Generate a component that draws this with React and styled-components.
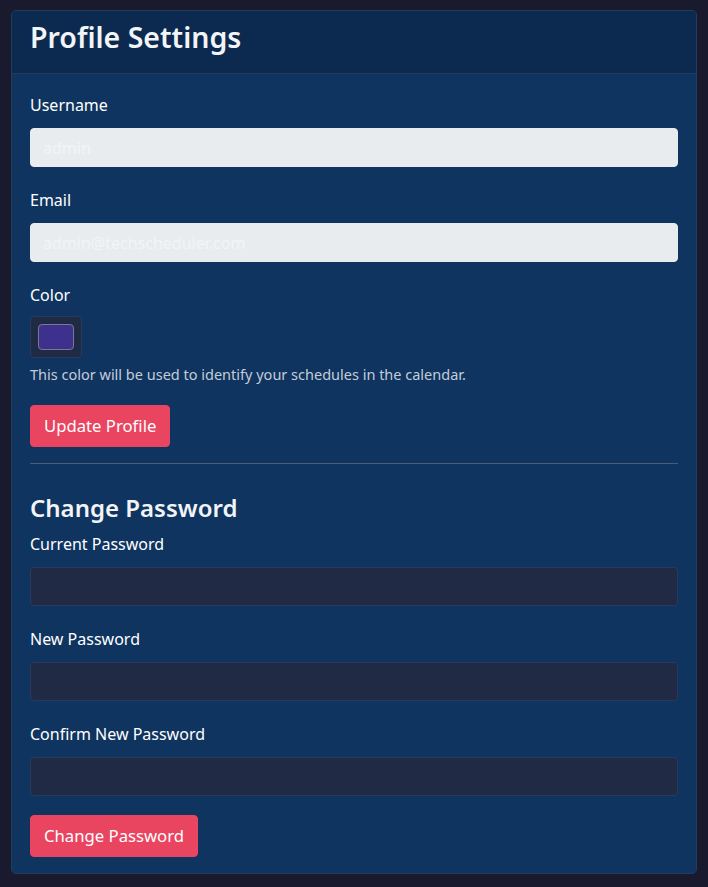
import React from "react";
import styled, { createGlobalStyle } from "styled-components";

const GlobalStyle = createGlobalStyle`
  html, body {
    margin: 0;
    padding: 0;
    background: #1a1a2e;
  }
  body {
    font-family: "Noto Sans", "Open Sans", sans-serif;
    color: #ffffff;
  }
  * { box-sizing: border-box; }
`;

const Page = styled.div`
  padding: 10px 11px 13px;
  background: #1a1a2e;
`;

const Card = styled.section`
  background: #0f3460;
  border: 1px solid #253b5e;
  border-radius: 5px;
  overflow: hidden;
`;

const CardHeader = styled.header`
  background: #0c2a4f;
  border-bottom: 1px solid #243a5c;
  padding: 9px 18px 0;
  height: 63px;
  display: flex;
  align-items: flex-start;
`;

const Title = styled.h2`
  margin: 0;
  font-size: 28.5px;
  line-height: 1.2;
  font-weight: 600;
  color: #f2f4f7;
`;

const CardBody = styled.div`
  padding: 18px 18px 16px;
`;

const FormGroup = styled.div`
  margin-bottom: ${(p) => p.$mb ?? 20}px;
`;

const Label = styled.label`
  display: block;
  font-size: 16px;
  line-height: 27px;
  margin-bottom: ${(p) => p.$mb ?? 9}px;
  color: #ffffff;
`;

const Input = styled.input`
  display: block;
  width: 100%;
  height: 39px;
  padding: 6px 12px;
  font-family: inherit;
  font-size: 16px;
  border-radius: 4px;
  outline: none;
  border: 1px solid ${(p) => (p.disabled ? "#e9ecef" : "#2a3a5c")};
  background: ${(p) => (p.disabled ? "#e9ecef" : "#212a45")};
  color: ${(p) => (p.disabled ? "#f3f4f6" : "#ffffff")};
  -webkit-text-fill-color: ${(p) => (p.disabled ? "#f3f4f6" : "#ffffff")};
  opacity: 1;
`;

const ColorBox = styled.div`
  width: 52px;
  height: 42px;
  padding: 7px;
  background: #1f2a45;
  border: 1px solid #2a3a5c;
  border-radius: 4px;
`;

const Swatch = styled.div`
  width: 100%;
  height: 100%;
  background: ${(p) => p.$color};
  border: 1px solid #7a7a8e;
  border-radius: 4px;
`;

const HelpText = styled.div`
  margin-top: 6px;
  font-size: 14.5px;
  line-height: 21px;
  color: #c4ccd8;
`;

const Button = styled.button`
  display: inline-block;
  font-family: inherit;
  font-size: 16.7px;
  line-height: 26px;
  padding: 7px 13px;
  color: #ffffff;
  background: #e94560;
  border: 1px solid #e94560;
  border-radius: 4px;
  cursor: pointer;
`;

const Divider = styled.hr`
  margin: 16px 0;
  border: 0;
  border-top: 1px solid #4a5b7c;
`;

const SectionTitle = styled.h4`
  margin: 29px 0 9px;
  font-size: 24px;
  line-height: 29px;
  font-weight: 600;
  color: #f2f4f7;
`;

export default function App() {
  return (
    <>
      <GlobalStyle />
      <Page>
        <Card>
          <CardHeader>
            <Title>Profile Settings</Title>
          </CardHeader>
          <CardBody>
            <FormGroup>
              <Label>Username</Label>
              <Input disabled value="admin" readOnly />
            </FormGroup>
            <FormGroup>
              <Label>Email</Label>
              <Input disabled value="admin@techscheduler.com" readOnly />
            </FormGroup>
            <FormGroup>
              <Label $mb={7}>Color</Label>
              <ColorBox>
                <Swatch $color="#3e318e" />
              </ColorBox>
              <HelpText>
                This color will be used to identify your schedules in the calendar.
              </HelpText>
            </FormGroup>
            <Button type="button">Update Profile</Button>
            <Divider />
            <SectionTitle>Change Password</SectionTitle>
            <FormGroup>
              <Label>Current Password</Label>
              <Input type="password" />
            </FormGroup>
            <FormGroup>
              <Label>New Password</Label>
              <Input type="password" />
            </FormGroup>
            <FormGroup $mb={19}>
              <Label>Confirm New Password</Label>
              <Input type="password" />
            </FormGroup>
            <Button type="button">Change Password</Button>
          </CardBody>
        </Card>
      </Page>
    </>
  );
}
